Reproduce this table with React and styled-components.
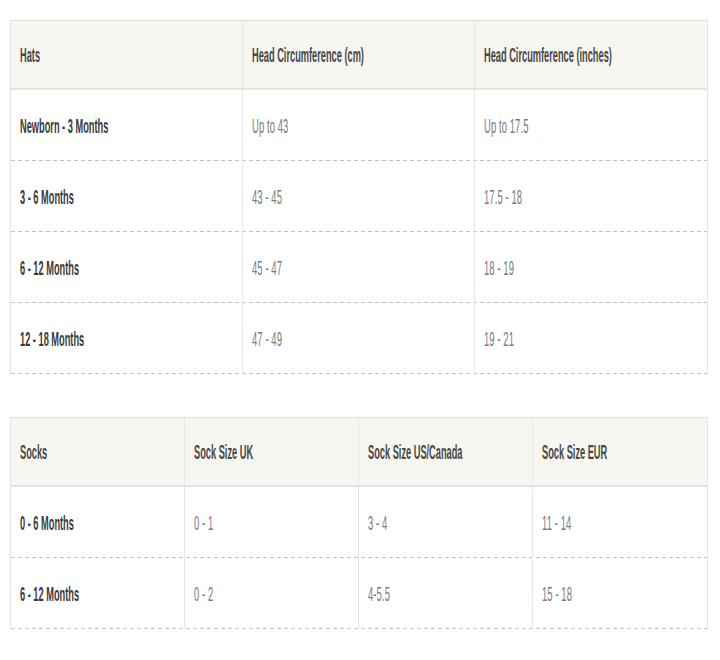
import React from "react";
import styled, { createGlobalStyle } from "styled-components";

const Global = createGlobalStyle`
  html, body { margin: 0; padding: 0; background: #ffffff; }
  body { font-family: "Liberation Sans", Arial, sans-serif; }
`;

const Page = styled.div`
  display: flex;
  flex-direction: column;
  gap: 43px;
  padding: 20px 12px 0 10px;
  width: 698px;
`;

const Table = styled.div`
  display: flex;
  flex-direction: column;
  border-left: 1px solid #e4e4e4;
  border-right: 1px solid #e4e4e4;
  border-top: 1px solid #e2e0db;
`;

const Row = styled.div`
  display: grid;
  grid-template-columns: repeat(${(p) => p.$cols}, 1fr);
  height: ${(p) => (p.$head ? "69px" : "71px")};
  background-color: ${(p) => (p.$head ? "#f8f6f0" : "#ffffff")};
  border-bottom: ${(p) => (p.$head ? "2px solid #e6e3dc" : "none")};
  box-sizing: border-box;
  background-image: ${(p) =>
    p.$head
      ? "none"
      : "linear-gradient(to right, #c2c2c2 4px, transparent 4px)"};
  background-size: 7px 1px;
  background-repeat: repeat-x;
  background-position: left bottom;
`;

const Cell = styled.div`
  display: flex;
  align-items: center;
  padding-left: 9px;
  border-right: 1px solid #e6e6e6;
  overflow: hidden;
  white-space: nowrap;
  &:last-child { border-right: none; }
`;

const Label = styled.span`
  display: inline-block;
  font-size: 21px;
  line-height: 1;
  transform: scaleX(${(p) => (p.$strong ? 0.44 : 0.45)});
  transform-origin: left center;
  font-weight: ${(p) => (p.$strong ? 700 : 400)};
  color: ${(p) => (p.$head ? "#474747" : p.$strong ? "#3a3a3a" : "#7a7a7a")};
  letter-spacing: ${(p) => (p.$strong ? "0" : "0.2px")};
`;

const hats = {
  head: ["Hats", "Head Circumference (cm)", "Head Circumference (inches)"],
  rows: [
    ["Newborn - 3 Months", "Up to 43", "Up to 17.5"],
    ["3 - 6 Months", "43 - 45", "17.5 - 18"],
    ["6 - 12 Months", "45 - 47", "18 - 19"],
    ["12 - 18 Months", "47 - 49", "19 - 21"],
  ],
};

const socks = {
  head: ["Socks", "Sock Size UK", "Sock Size US/Canada", "Sock Size EUR"],
  rows: [
    ["0 - 6 Months", "0 - 1", "3 - 4", "11 - 14"],
    ["6 - 12 Months", "0 - 2", "4-5.5", "15 - 18"],
  ],
};

function SizeTable({ data }) {
  const cols = data.head.length;
  return (
    <Table>
      <Row $head $cols={cols}>
        {data.head.map((h) => (
          <Cell key={h}>
            <Label $head $strong>{h}</Label>
          </Cell>
        ))}
      </Row>
      {data.rows.map((r) => (
        <Row key={r[0]} $cols={cols}>
          {r.map((c, i) => (
            <Cell key={i}>
              <Label $strong={i === 0}>{c}</Label>
            </Cell>
          ))}
        </Row>
      ))}
    </Table>
  );
}

export default function App() {
  return (
    <>
      <Global />
      <Page>
        <SizeTable data={hats} />
        <SizeTable data={socks} />
      </Page>
    </>
  );
}
